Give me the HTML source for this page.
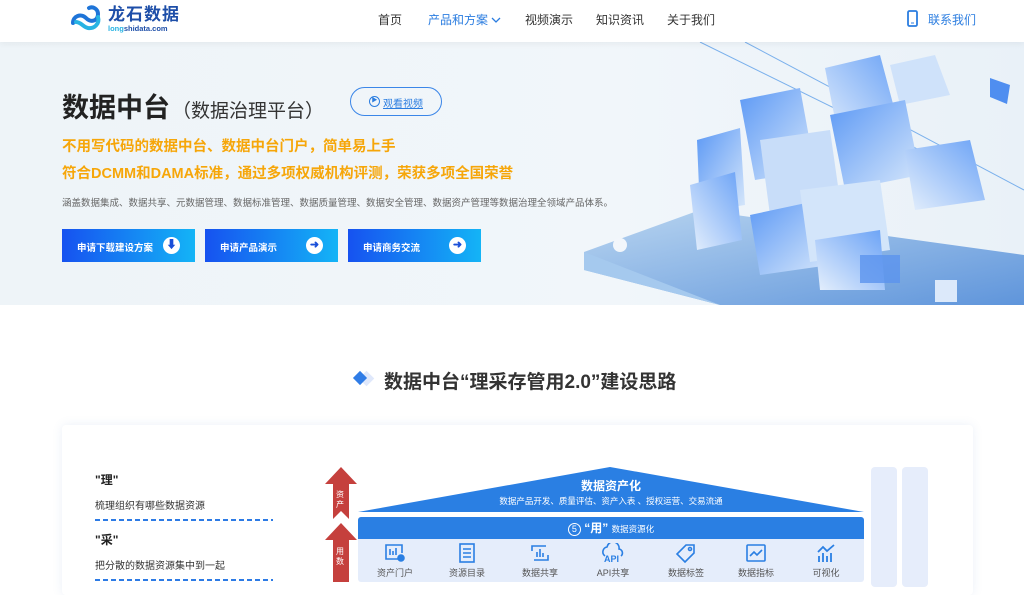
<!DOCTYPE html>
<html><head><meta charset="utf-8"><style>
*{margin:0;padding:0;box-sizing:border-box}
body{width:1024px;height:582px;overflow:hidden;background:#fff;font-family:"Liberation Sans","Noto Sans CJK SC",sans-serif;position:relative}
.a{position:absolute;white-space:nowrap}
.nav{font-size:12px;color:#333;top:11px}
.hero{position:absolute;left:0;top:42px;width:1024px;height:263px;background:linear-gradient(90deg,#eef4f8,#f1f6fa 60%,#e9f1f8)}
.hdr{position:absolute;left:0;top:0;width:1024px;height:42px;background:#fff;box-shadow:0 2px 6px rgba(0,0,0,.05);z-index:2}
.btn{position:absolute;top:229px;width:133px;height:33px;background:linear-gradient(90deg,#1652f0,#14b4f6);color:#fff;font-size:9.5px;font-weight:bold;padding:11px 0 0 15px}
.btn i{position:absolute;right:15px;top:8px;width:17px;height:17px;border-radius:50%;background:#fff;color:#1a4fd8;font-style:normal;font-size:11px;line-height:17px;text-align:center;padding:0}
.or{color:#f6a609;font-size:14.5px;font-weight:bold;left:62px}
.ic{position:absolute;top:543px;width:60px;text-align:center;font-size:9px;color:#555}
.ic svg{display:block;margin:0 auto 3px}
.dash{position:absolute;left:95px;width:178px;height:2px;background:repeating-linear-gradient(90deg,#2d7be5 0 5px,transparent 5px 8px)}
</style></head><body>
<div class="hdr">
 <svg class="a" style="left:69px;top:5px" width="34" height="28" viewBox="0 0 34 28"><path d="M4 18c0-7 8-10 13-5s12 3 12-4c0-5-5-8-9-6" fill="none" stroke="#1e74d8" stroke-width="4" stroke-linecap="round"/><path d="M29 12c2 7-4 12-10 11-5-1-7-6-12-6" fill="none" stroke="#27b3e3" stroke-width="4" stroke-linecap="round"/></svg>
 <div class="a" style="left:108px;top:5px;font-size:17px;line-height:19px;font-weight:bold;color:#1d4ea8;letter-spacing:1px">龙石数据</div>
 <div class="a" style="left:108px;top:24px;font-size:7.5px;line-height:9px;font-weight:bold;color:#1d4ea8"><span style="color:#27b3e3">long</span>shidata.com</div>
 <div class="a nav" style="left:378px">首页</div>
 <div class="a nav" style="left:428px;color:#2b7de0">产品和方案 <svg width="10" height="8" viewBox="0 0 10 8"><path d="M1 2l4 4 4-4" fill="none" stroke="#2b7de0" stroke-width="1.3"/></svg></div>
 <div class="a nav" style="left:525px">视频演示</div>
 <div class="a nav" style="left:596px">知识资讯</div>
 <div class="a nav" style="left:667px">关于我们</div>
 <svg class="a" style="left:907px;top:10px" width="11" height="17" viewBox="0 0 11 17"><rect x="1" y="1" width="9" height="15" rx="1.5" fill="none" stroke="#2b7de0" stroke-width="1.8"/><path d="M4 13h3" stroke="#2b7de0"/></svg>
 <div class="a nav" style="left:928px;color:#2b7de0">联系我们</div>
</div>
<div class="hero">
<svg class="a" style="left:560px;top:0" width="464" height="263" viewBox="560 42 464 263">
 <defs><linearGradient id="g" x1="0" y1="0" x2="1" y2="1"><stop offset="0" stop-color="#5b98f5"/><stop offset="1" stop-color="#d8e8fb"/></linearGradient>
 <linearGradient id="g2" x1="1" y1="0" x2="0" y2="1"><stop offset="0" stop-color="#6aa2f6"/><stop offset="1" stop-color="#e6f0fc"/></linearGradient>
 <linearGradient id="s" x1="0" y1="0" x2="1" y2="1"><stop offset="0" stop-color="#b9d5f0"/><stop offset="1" stop-color="#5f95db"/></linearGradient></defs>
 <path d="M700 42L960 170M745 42L1024 190" stroke="#7ab0ec" stroke-width="1"/>
 <polygon points="584,252 700,210 1024,255 1024,305 720,305 584,270" fill="url(#s)"/>
 <polygon points="584,252 720,305 584,270" fill="#a5c9ee"/>
 <circle cx="620" cy="245" r="7" fill="#f2f6fb"/>
 <polygon points="697,140 740,128 745,205 700,212" fill="url(#g)"/>
 <polygon points="690,185 735,172 742,240 697,250" fill="url(#g2)"/>
 <polygon points="740,100 800,88 815,170 755,180" fill="url(#g)"/>
 <polygon points="825,68 880,55 900,130 840,145" fill="url(#g2)"/>
 <polygon points="890,65 935,55 950,95 900,105" fill="#cfe2fa"/>
 <polygon points="760,140 830,130 840,200 770,215" fill="#c8ddf9"/>
 <polygon points="830,115 905,100 920,175 845,190" fill="url(#g)"/>
 <polygon points="905,150 970,140 985,200 915,210" fill="url(#g2)"/>
 <polygon points="750,215 820,200 830,265 760,275" fill="url(#g)"/>
 <polygon points="800,190 880,180 890,250 810,262" fill="#d3e5fa"/>
 <polygon points="815,240 880,230 885,290 820,290" fill="url(#g2)"/>
 <rect x="860" y="255" width="40" height="28" fill="#5b93ee" opacity=".8"/>
 <polygon points="990,78 1010,85 1007,104 990,97" fill="#4f8ef0"/>
 <rect x="935" y="280" width="22" height="22" fill="#dce9fa"/>
</svg>
 <div class="a" style="left:62px;top:44px;font-size:27px;font-weight:bold;color:#222">数据中台<span style="font-size:19px;font-weight:normal;color:#333;margin-left:2px">（数据治理平台）</span></div>
 <div class="a" style="left:350px;top:45px;width:92px;height:29px;border:1.3px solid #3b86e8;border-radius:15px;font-size:10px;color:#2b7de0;text-decoration:underline;padding:7px 0 0 18px"><span style="position:absolute;left:18px;top:8px;width:11px;height:11px;border:1.3px solid #2b7de0;border-radius:50%;font-size:6px;line-height:9px;text-align:center;text-decoration:none">▶</span><span style="margin-left:14px">观看视频</span></div>
</div>
<div class="a or" style="top:135px">不用写代码的数据中台、数据中台门户，简单易上手</div>
<div class="a or" style="top:162px">符合DCMM和DAMA标准，通过多项权威机构评测，荣获多项全国荣誉</div>
<div class="a" style="left:62px;top:195px;font-size:9.5px;color:#666">涵盖数据集成、数据共享、元数据管理、数据标准管理、数据质量管理、数据安全管理、数据资产管理等数据治理全领域产品体系。</div>
<div class="btn" style="left:62px">申请下载建设方案<i>⬇</i></div>
<div class="btn" style="left:205px">申请产品演示<i>➜</i></div>
<div class="btn" style="left:348px">申请商务交流<i>➜</i></div>

<svg class="a" style="left:352px;top:370px" width="26" height="18" viewBox="0 0 26 18"><rect x="9" y="3" width="11" height="11" transform="rotate(45 14.5 8.5)" fill="#dfe8fb"/><rect x="3" y="3" width="10" height="10" transform="rotate(45 8 8)" fill="#2f7ce6"/></svg>
<div class="a" style="left:384px;top:367px;font-size:19px;font-weight:bold;color:#333">数据中台“理采存管用2.0”建设思路</div>

<div class="a" style="left:62px;top:425px;width:911px;height:170px;background:#fff;border-radius:4px;box-shadow:0 0 10px rgba(90,130,200,.12)"></div>
<div class="a" style="left:95px;top:471px;font-size:12px;font-weight:bold;color:#222">"理"</div>
<div class="a" style="left:95px;top:497px;font-size:10px;color:#333">梳理组织有哪些数据资源</div>
<div class="dash" style="top:519px"></div>
<div class="a" style="left:95px;top:531px;font-size:12px;font-weight:bold;color:#222">"采"</div>
<div class="a" style="left:95px;top:557px;font-size:10px;color:#333">把分散的数据资源集中到一起</div>
<div class="dash" style="top:579px"></div>

<svg class="a" style="left:324px;top:467px" width="34" height="115" viewBox="0 0 34 115"><path d="M17 0L33 17H25V52L17 44 9 52V17H1z" fill="#c5403d"/><path d="M17 56L33 73H25V115H9V73H1z" fill="#c5403d"/></svg>
<div class="a" style="left:336px;top:490px;font-size:8px;color:#fff;width:10px;line-height:10px;white-space:normal">资产</div>
<div class="a" style="left:336px;top:547px;font-size:8px;color:#fff;width:10px;line-height:10px;white-space:normal">用数</div>

<svg class="a" style="left:358px;top:467px" width="506" height="46" viewBox="0 0 506 46"><polygon points="252,0 506,45 0,45" fill="#2a7fe3"/></svg>
<div class="a" style="left:358px;top:477px;width:506px;text-align:center;color:#fff;font-weight:bold;font-size:12px">数据资产化</div>
<div class="a" style="left:358px;top:495px;width:506px;text-align:center;color:#fff;font-size:8.5px">数据产品开发、质量评估、资产入表 、授权运营、交易流通</div>
<div class="a" style="left:358px;top:517px;width:506px;height:65px;background:#e5edfb;border-radius:3px"></div>
<div class="a" style="left:358px;top:517px;width:506px;height:22px;background:#2a7fe3;border-radius:3px 3px 0 0;color:#fff;text-align:center;font-size:12px;line-height:22px"><span style="display:inline-block;width:13px;height:13px;border:1px solid #fff;border-radius:50%;font-size:9px;line-height:11px">5</span> <b>“用”</b> <span style="font-size:8.5px">数据资源化</span></div>
<div class="ic" style="left:365px"><svg width="22" height="20" viewBox="0 0 22 20" fill="none" stroke="#2a7fe3" stroke-width="1.6"><path d="M14 16H2V2h16v8"/><path d="M6 6v6M9 8v4M12 5v7"/><circle cx="17" cy="15" r="3" fill="#2a7fe3"/></svg>资产门户</div>
<div class="ic" style="left:437px"><svg width="22" height="20" viewBox="0 0 22 20" fill="none" stroke="#2a7fe3" stroke-width="1.6"><rect x="4" y="1" width="14" height="18"/><path d="M7 6h8M7 10h8M7 14h8"/></svg>资源目录</div>
<div class="ic" style="left:510px"><svg width="22" height="20" viewBox="0 0 22 20" fill="none" stroke="#2a7fe3" stroke-width="1.6"><path d="M3 8V3h14M19 12v5H5"/><path d="M8 14V9M11 14V6M14 14V10"/></svg>数据共享</div>
<div class="ic" style="left:583px"><svg width="26" height="20" viewBox="0 0 26 20" fill="none" stroke="#2a7fe3" stroke-width="1.6"><path d="M5 13a5 5 0 0 1 2-9 6 6 0 0 1 12 2 4 4 0 0 1 2 7"/><text x="4" y="19" font-size="9" font-weight="bold" fill="#2a7fe3" stroke="none" font-family="Liberation Sans">API</text></svg>API共享</div>
<div class="ic" style="left:656px"><svg width="22" height="20" viewBox="0 0 22 20" fill="none" stroke="#2a7fe3" stroke-width="1.6"><path d="M11 2h8v8l-9 9-8-8z"/><circle cx="15" cy="6" r="1.5"/></svg>数据标签</div>
<div class="ic" style="left:726px"><svg width="22" height="20" viewBox="0 0 22 20" fill="none" stroke="#2a7fe3" stroke-width="1.6"><rect x="2" y="2" width="18" height="16" rx="1"/><path d="M5 13l4-4 3 3 5-5"/></svg>数据指标</div>
<div class="ic" style="left:796px"><svg width="22" height="20" viewBox="0 0 22 20" fill="none" stroke="#2a7fe3" stroke-width="1.8"><path d="M4 19v-6M8 19v-9M12 19v-6M16 19v-9M3 9l5-5 4 4 7-6"/></svg>可视化</div>
<div class="a" style="left:871px;top:467px;width:26px;height:120px;background:#e6edfb;border-radius:4px"></div>
<div class="a" style="left:902px;top:467px;width:26px;height:120px;background:#e6edfb;border-radius:4px"></div>
</body></html>
